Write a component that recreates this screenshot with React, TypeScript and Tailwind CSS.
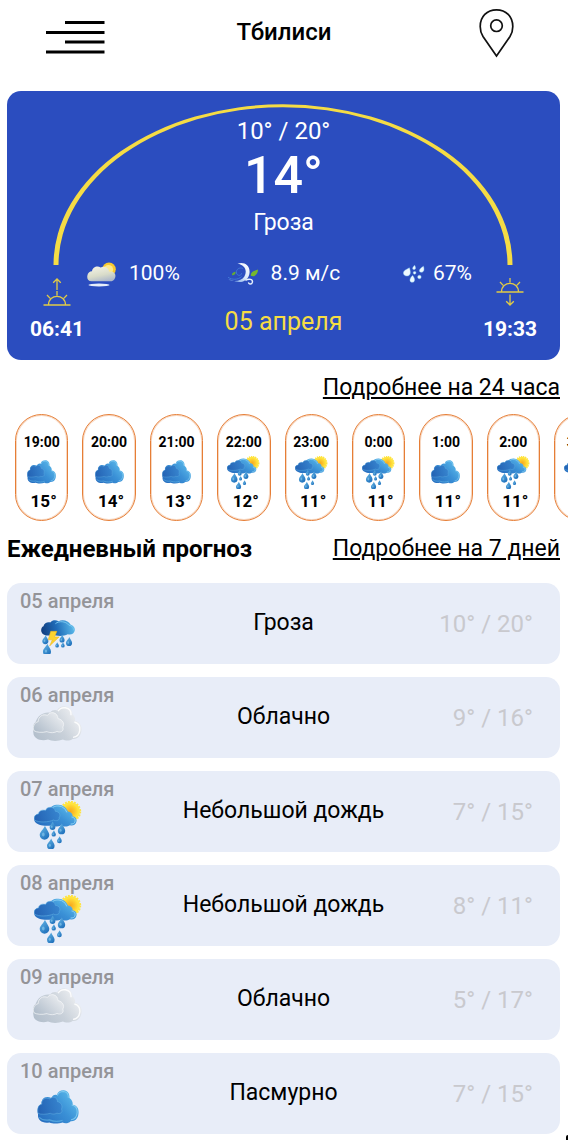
import React from 'react';

type Sky = 'overcast' | 'rain' | 'storm' | 'cloudy';

const HOURS: { time: string; sky: Sky; temp: number }[] = [
  { time: '19:00', sky: 'overcast', temp: 15 },
  { time: '20:00', sky: 'overcast', temp: 14 },
  { time: '21:00', sky: 'overcast', temp: 13 },
  { time: '22:00', sky: 'rain', temp: 12 },
  { time: '23:00', sky: 'rain', temp: 11 },
  { time: '0:00', sky: 'rain', temp: 11 },
  { time: '1:00', sky: 'overcast', temp: 11 },
  { time: '2:00', sky: 'rain', temp: 11 },
  { time: '3:00', sky: 'rain', temp: 10 },
];

const DAYS: { date: string; sky: Sky; label: string; low: number; high: number }[] = [
  { date: '05 апреля', sky: 'storm', label: 'Гроза', low: 10, high: 20 },
  { date: '06 апреля', sky: 'cloudy', label: 'Облачно', low: 9, high: 16 },
  { date: '07 апреля', sky: 'rain', label: 'Небольшой дождь', low: 7, high: 15 },
  { date: '08 апреля', sky: 'rain', label: 'Небольшой дождь', low: 8, high: 11 },
  { date: '09 апреля', sky: 'cloudy', label: 'Облачно', low: 5, high: 17 },
  { date: '10 апреля', sky: 'overcast', label: 'Пасмурно', low: 7, high: 15 },
];

const BACK =
  'M14 8C15 5 17.5 4 19.5 5C20 1.8 22.5 .3 26 .3C30 .3 32.3 4 31.8 8C34 9.5 35.3 12 35 14.5C38.8 15 41 18 40.8 22C40.8 27 38 31.3 33 30.8C31 33 27 33.3 25 32C21 33.4 15 33.4 12 32C6 33.5 0 30 .8 24C0 19 .5 15 4.5 14C3.5 9 8 5 14 8Z';
const FRONT =
  'M.8 23C0 18 1 14.6 4.5 14C3.8 9.5 8.5 6.6 12.5 8.8C15 5.8 20 7 20 11.5C23.8 12 25.3 16 24 18.8C25.6 22 22.5 24.2 19.5 22.8C17 24.4 14 23.6 13 23C9 24 4 24.4 .8 23Z';

const FLAT_BACK =
  'M15 10C16 5.5 20 3.6 24.5 3.8C29 3.8 32.6 7 34 10.5C37 10.8 38.8 13 38.6 15.2C42 15.6 43 18 42.5 20.5C42 23.5 39 25 36 24.2C33 26 29 25.6 27 24.4C24 26 20 25.6 18 24.2C13 25.6 3 25 .5 20C-.2 16 1 13.5 4.5 13C7 9.5 11 8.5 15 10Z';
const FLAT_FRONT =
  'M.5 19C-.5 15.5 1.6 13.2 4.5 13C4.6 9.8 8.5 8.3 11.5 9.6C12.5 5.4 20.5 4.8 21.5 10.4C25.4 10.4 27 14.5 25.2 16.4C26 19.6 21.5 20.4 19.5 19C15 21.2 4.5 22 .5 19Z';

function Gradients() {
  return (
    <svg className="absolute size-0" aria-hidden="true">
      <defs>
        <linearGradient id="blueBack" x1="0" y1="1" x2="1" y2="0.3">
          <stop offset="0" stopColor="#2468bb" />
          <stop offset="0.6" stopColor="#3a90d6" />
          <stop offset="1" stopColor="#5bb9ea" />
        </linearGradient>
        <linearGradient id="blueFront" x1="0" y1="0.6" x2="1" y2="0.4">
          <stop offset="0" stopColor="#2463b4" />
          <stop offset="1" stopColor="#3785cf" />
        </linearGradient>
        <linearGradient id="stormBack" x1="0" y1="0.5" x2="1" y2="0.4">
          <stop offset="0" stopColor="#123f80" />
          <stop offset="0.45" stopColor="#1f6bb8" />
          <stop offset="1" stopColor="#5cbcec" />
        </linearGradient>
        <linearGradient id="greyBack" x1="0" y1="0.8" x2="1" y2="0.3">
          <stop offset="0" stopColor="#b3bfcc" />
          <stop offset="0.5" stopColor="#c8d0d9" />
          <stop offset="1" stopColor="#f1f2f4" />
        </linearGradient>
        <linearGradient id="greyFront" x1="0" y1="0.9" x2="1" y2="0.2">
          <stop offset="0" stopColor="#aebbc9" />
          <stop offset="1" stopColor="#eceef1" />
        </linearGradient>
        <linearGradient id="drop" x1="0" y1="0" x2="0.6" y2="1">
          <stop offset="0" stopColor="#67b9e8" />
          <stop offset="1" stopColor="#2273bd" />
        </linearGradient>
        <radialGradient id="sun">
          <stop offset="0" stopColor="#f7a81c" />
          <stop offset="0.55" stopColor="#fcc62c" />
          <stop offset="1" stopColor="#ffe23a" />
        </radialGradient>
        <linearGradient id="cream" x1="0.2" y1="0" x2="0.6" y2="1">
          <stop offset="0" stopColor="#f4f3e6" />
          <stop offset="0.6" stopColor="#d9dcc9" />
          <stop offset="1" stopColor="#aeb9cb" />
        </linearGradient>
        <linearGradient id="breeze" x1="0" y1="1" x2="1" y2="0">
          <stop offset="0" stopColor="#4f86dc" />
          <stop offset="0.5" stopColor="#d8e8fb" />
          <stop offset="1" stopColor="#ffffff" />
        </linearGradient>
      </defs>
    </svg>
  );
}

function Drop({ x, y, s }: { x: number; y: number; s: number }) {
  return (
    <g transform={`translate(${x} ${y}) scale(${s})`}>
      <path d="M.1-1.35C.35-.7 1 0 1 .55A1 1 0 0 1-1 .55C-1-.05-.2-.6.1-1.35Z" fill="url(#drop)" />
      <ellipse cx="-.25" cy=".45" rx=".28" ry=".42" fill="#9fdcf7" opacity=".5" />
    </g>
  );
}

function BlueCloud({ className }: { className: string }) {
  return (
    <svg viewBox="0 0 41 33.5" className={className} aria-hidden="true">
      <path d={BACK} fill="url(#blueBack)" />
      <path d="M20 5.5C20.5 2.5 23 1.4 26 1.4C29.5 1.6 31 4.4 30.6 7.6M34 14.8C38 15.6 39.6 18.4 39.4 22C39.2 26 36.8 29 33.4 29.4" fill="none" stroke="#8fd3f4" strokeWidth="1" opacity=".8" />
      <path d={FRONT} fill="url(#blueFront)" stroke="#65b0e3" strokeWidth=".7" strokeOpacity=".7" />
      <path d="M2 27C5 30 9 30 12 29.5C17 31.5 22 31 25 29.8" fill="none" stroke="#68bde9" strokeWidth="1.2" opacity=".6" />
    </svg>
  );
}

function GreyCloud({ className }: { className: string }) {
  return (
    <svg viewBox="0 0 49 35" className={className} aria-hidden="true">
      <path d="M17 6.6C19 4.2 21.5 3.6 24 4.4C26 .8 29.5 0 32.5 .4C37 1 39.5 4.4 39.5 8.6C41.8 10.2 42.4 12.6 42 14.8C46 15.6 49 19.4 48.6 24C48.2 29.4 44.6 33.6 39.6 33C37 35 32.4 35 30 33.6C25 35.4 18.6 35.2 15 33.6C8 35.4 .6 33 .4 27C-.4 22 0 18 2.6 16C5 9 11 5.5 17 6.6Z" fill="url(#greyBack)" />
      <path d="M25 5.2C27 2 30 1.4 32.4 1.8C36.4 2.4 38.3 5.4 38 9.2M41.4 16C45.4 17 47.2 20 46.8 24.2C46.3 28.4 43.6 31 40 31.4" fill="none" stroke="#fff" strokeWidth="1.4" opacity=".85" />
      <path d="M.8 24.6C-.4 20 1.4 16.6 5.2 15.6C5 10.6 10 7.4 14.5 9.4C17 4.6 25 6.2 25 12.6C29.6 13.4 32 18 29.8 21C31.400 25.400 27 27 24 25.400C20 27.600 15.500 26.400 14 25.600C9 27 3.400 26.400 .8 24.600Z" fill="url(#greyFront)" stroke="#f7f8f9" strokeWidth=".7" />
    </svg>
  );
}

function RainCloud({ className }: { className: string }) {
  return (
    <svg viewBox="0 0 48 48" className={className} aria-hidden="true">
      <circle cx="36.5" cy="10.500" r="9.500" fill="#ffe441" stroke="#ffe441" strokeWidth="2.400" strokeDasharray="1.800 1.200" />
      <circle cx="36.5" cy="10.500" r="7.600" fill="url(#sun)" />
      <path d={FLAT_BACK} fill="url(#blueBack)" />
      <path d="M17 8.6C19 5.4 22 4.8 25 5C28.4 5.2 31.6 7.8 32.8 11.4M37.6 16C40.8 16.6 41.4 18.6 41 20.4C40.6 22.4 38.8 23.2 36.6 23" fill="none" stroke="#8fd3f4" strokeWidth="1" />
      <path d={FLAT_FRONT} fill="url(#blueFront)" stroke="#5faee2" strokeWidth=".6" />
      <Drop x={10.5} y={31.3} s={4.8} />
      <Drop x={18.5} y={24.4} s={2.9} />
      <Drop x={27.5} y={27.6} s={3.7} />
      <Drop x={19.7} y={32.2} s={2.2} />
      <Drop x={25.4} y={38.6} s={2.4} />
      <Drop x={16.8} y={42.6} s={3.8} />
    </svg>
  );
}

function StormCloud({ className }: { className: string }) {
  return (
    <svg viewBox="0 0 33 33" className={className} aria-hidden="true">
      <path d="M2.4 6C3 3 6.4 1.6 9 2.4C11-.2 15 0 17 1.2C21-1 27 .6 28.6 4.4C31.8 5.4 33 7.6 32.8 10C32.4 13.4 29 14.8 26 13.8C22 16.2 15 15.6 12 14.4C7 16 .8 15 .2 10.6C0 8.4 .8 6.6 2.4 6Z" fill="url(#stormBack)" />
      <path d="M14 3.6C17 .8 24 .8 27 5C30.6 5.6 31.8 8 31.4 10" fill="none" stroke="#7cc9f0" strokeWidth=".9" />
      <Drop x={4.2} y={18.8} s={3} />
      <Drop x={20.4} y={18} s={2.5} />
      <Drop x={27.2} y={20.6} s={3} />
      <Drop x={15.6} y={24} s={1.8} />
      <Drop x={21.2} y={24} s={1.8} />
      <Drop x={5.8} y={28.4} s={3.9} />
      <path d="M9.400 11H15.400L13.200 16.400H17.600L8.400 25.200L11 19.200H7Z" fill="#fbd32f" stroke="#f1b51d" strokeWidth=".5" />
    </svg>
  );
}

const HOUR_ICON: Record<Sky, React.ReactNode> = {
  overcast: <BlueCloud className="mt-1 h-6 w-[29px]" />,
  rain: <RainCloud className="size-[33px]" />,
  storm: <StormCloud className="size-[33px]" />,
  cloudy: <GreyCloud className="mt-1 h-6 w-[33px]" />,
};

const DAY_ICON: Record<Sky, React.ReactNode> = {
  overcast: <BlueCloud className="h-[34px] w-[42px]" />,
  rain: <RainCloud className="size-12" />,
  storm: <StormCloud className="size-[34px]" />,
  cloudy: <GreyCloud className="mb-4 h-[35px] w-[49px]" />,
};

function HumidCloudIcon() {
  return (
    <svg viewBox="0 0 30 25" className="h-[25px] w-[30px]" aria-hidden="true">
      <circle cx="22" cy="7.200" r="6.800" fill="#f9c92f" />
      <circle cx="21.500" cy="7.600" r="4.600" fill="#fde88a" />
      <path d="M5 9.200C5.400 5 10.600 3.200 13.600 5.600C17.400 3.400 22 6 22 9.800C26 8.600 29.400 11.600 28.200 15.400C27.400 18.600 24.600 19.600 21.600 19.200H4.600C1 19.200-.2 16.400 .4 13.600C.8 11 2.600 9.200 5 9.200Z" fill="url(#cream)" />
      <ellipse cx="12" cy="23" rx="10.600" ry="1.400" fill="#e6eefb" />
    </svg>
  );
}

function WindIcon() {
  return (
    <svg viewBox="0 0 32 24" className="h-6 w-8" aria-hidden="true">
      <path d="M10.5 1.800C16.500-.6 22.800 3 22.600 10C22.400 17.400 15.600 21.600 8.600 19.600C6.600 19 4.200 17.400 1.400 17.600C7 20.400 14.600 19 17.400 14.600C20.800 8.400 17.400 2.600 10.500 1.800Z" fill="url(#breeze)" />
      <path d="M15.8 6.4C12.4 5 8.800 7.400 9.400 11C10 14 14.400 14.200 14.600 11.200M1 15.200C5 18 11 18 14.600 14.600" fill="none" stroke="#3f76d6" strokeWidth="1" />
      <path d="M18.4 18.4C22 16.2 26.2 17.4 25.4 20.4C24.8 22.8 21.4 22.4 21.6 20.4" fill="none" stroke="#e5effc" strokeWidth="1.4" />
      <path d="M23.8 13.8C23.6 9.8 27 8.8 31 7.6C31 11.6 28.4 15.4 23.8 13.8Z" fill="#75b72d" />
      <path d="M5 13C4.800 10.800 6.600 10.200 8.600 9.800C8.600 12 7.400 13.800 5 13Z" fill="#65ab35" />
    </svg>
  );
}

function DropsIcon() {
  return (
    <svg viewBox="0 0 22 18" className="h-[18px] w-[22px]" aria-hidden="true">
      <g fill="#eef9ff" stroke="#8ed4f6" strokeWidth=".4">
        <path d="M6.400 2.800C7.600 6 8.400 11 4 11C-.2 11-.8 6.800 2.400 5Z" />
        <path d="M11.600.2C13.200 2.800 12.600 4.600 11 4.600C9.200 4.600 9 2.800 11.600.2Z" />
        <path d="M20.400 1.200C21.800 5 20.600 7.400 18 7.200C15.200 6.800 16 3.800 20.400 1.200Z" />
        <path d="M9.600 10.400C12.400 13.600 12.200 17.200 9.200 17.200C6.200 17.200 6 13.600 9.600 10.400Z" />
        <circle cx="11.600" cy="7.800" r="1.400" />
        <circle cx="16.400" cy="12" r="1.800" />
      </g>
    </svg>
  );
}

function SunHorizon({ setting = false }: { setting?: boolean }) {
  return (
    <svg viewBox="0 0 28 28" className="size-7" fill="none" stroke="#e2cb45" strokeWidth="1.3" aria-hidden="true">
      <g transform={setting ? 'translate(0 -13)' : undefined}>
        <path d="M0.5 27H27.5M5.5 27C5.5 15.500 22.500 15.500 22.500 27M14 13V17.500M4 17L7.200 20.400M24 17L20.800 20.400" />
      </g>
      {setting ? <path d="M14 16.500V27M10.200 23.200L14 27L17.800 23.200" /> : <path d="M14 12V1M10.200 4.800L14 1L17.800 4.800" />}
    </svg>
  );
}

function SunTime({ time, setting }: { time: string; setting?: boolean }) {
  return (
    <div className="mt-[18px] flex w-[60px] flex-col items-center">
      <SunHorizon setting={setting} />
      <span className="mt-[11px] text-[21px] leading-6 font-bold">{time}</span>
    </div>
  );
}

export default function App() {
  return (
    <div className="relative min-h-screen overflow-hidden bg-white pb-1 font-[Roboto,'Noto_Sans',sans-serif] text-black">
      <Gradients />
      <header className="grid h-[91px] grid-cols-3 items-start">
        <button type="button" aria-label="Меню" className="mt-5 ml-[45px] justify-self-start">
          <svg viewBox="0 0 60 34" className="h-[34px] w-[60px]" stroke="#000" strokeWidth="3" aria-hidden="true">
            <path d="M20 2.500H59.500M1 12.500H59.500M20 22H59.500M1 32H59.500" />
          </svg>
        </button>
        <h1 className="mt-4 justify-self-center text-[24px] leading-8 font-medium">Тбилиси</h1>
        <button type="button" aria-label="Местоположение" className="mt-2 mr-[53px] justify-self-end">
          <svg viewBox="0 0 36 50" className="h-[50px] w-9" fill="none" stroke="#111" strokeWidth="1.7" aria-hidden="true">
            <path d="M17.500 48L4 28.500C1.900 25.200 1.200 22 1.200 18.500C1.200 8.500 8 1.800 17.500 1.800S33.800 8.500 33.800 18.500C33.800 22 33.100 25.200 31 28.500Z" />
            <ellipse cx="17.500" cy="17.700" rx="5.800" ry="5.800" />
          </svg>
        </button>
      </header>

      <main className="pl-[7px]">
        <section className="relative mr-2 rounded-[14px] bg-[#2b4dbf] pt-[26px] pb-[19px] text-white">
          <svg
            viewBox="0 0 553 269"
            preserveAspectRatio="none"
            className="absolute inset-0 size-full"
            aria-hidden="true"
          >
            <path d="M46.500 174A229.500 160.700 0 0 1 505.500 174H500.500A224.500 157.700 0 0 0 51.500 174Z" fill="#f5dc45" />
          </svg>
          <div className="relative flex flex-col items-center">
            <p className="text-[24px] leading-7">10° / 20°</p>
            <p className="text-[52px] leading-[62px] font-medium">14°</p>
            <p className="text-[23px] leading-8">Гроза</p>
          </div>
          <div className="relative mt-[21px] flex justify-between px-5">
            <SunTime time="06:41" />
            <div className="flex grow flex-col items-center">
              <div className="flex h-7 w-full items-center justify-between">
                <span className="flex items-center gap-3 text-[21px]"><HumidCloudIcon />100%</span>
                <span className="flex items-center gap-3 text-[21px]"><WindIcon />8.9 м/с</span>
                <span className="flex items-center gap-2 pr-2 pl-4 text-[21px]"><DropsIcon />67%</span>
              </div>
              <p className="mt-[18px] text-[25px] leading-8 text-[#f5dc45]">05 апреля</p>
            </div>
            <SunTime time="19:33" setting />
          </div>
        </section>

        <div className="mt-3 mr-2 flex justify-end">
          <a href="#hourly" className="text-[23px] leading-8 underline decoration-2 underline-offset-2">
            Подробнее на 24 часа
          </a>
        </div>

        <ul className="mt-[10px] ml-2 grid auto-cols-[calc((100%-126px)/8)] grid-flow-col gap-[14px] overflow-hidden">
          {HOURS.map((h) => (
            <li
              key={h.time}
              className="flex h-[107px] flex-col items-center rounded-full border border-[#e67e36] pt-[17px] ring-1 ring-[#e67e36]/30 ring-inset"
            >
              <span className="text-[14px] leading-5 font-bold">{h.time}</span>
              <span className="mt-1 flex h-[35px] items-start">{HOUR_ICON[h.sky]}</span>
              <span className="pl-1 text-[17px] leading-5 font-bold">{h.temp}°</span>
            </li>
          ))}
        </ul>

        <div className="mt-3 mr-2 flex items-center justify-between">
          <h2 className="text-[24px] leading-8 font-bold">Ежедневный прогноз</h2>
          <a href="#weekly" className="text-[23px] leading-8 underline decoration-2 underline-offset-2">
            Подробнее на 7 дней
          </a>
        </div>

        <ul className="mt-[18px] mr-2 flex flex-col gap-[13px]">
          {DAYS.map((d) => (
            <li
              key={d.date}
              className="grid h-[81px] grid-cols-[114px_1fr_100px] items-center rounded-[14px] bg-[#e8edf8] pr-[27px] pl-[13px]"
            >
              <div className="flex h-full flex-col pt-[6px]">
                <span className="text-[20px] leading-6 font-medium text-[#949498]">{d.date}</span>
                <span className="flex h-12 w-[75px] items-center justify-center">{DAY_ICON[d.sky]}</span>
              </div>
              <span className="text-center text-[23px]">{d.label}</span>
              <span className="text-right text-[24px] text-[#c9c9ce]">
                {d.low}° / {d.high}°
              </span>
            </li>
          ))}
        </ul>
      </main>
      <span className="absolute right-0 bottom-0 h-[5px] w-[2px] rounded-tl-full bg-black" />
    </div>
  );
}
